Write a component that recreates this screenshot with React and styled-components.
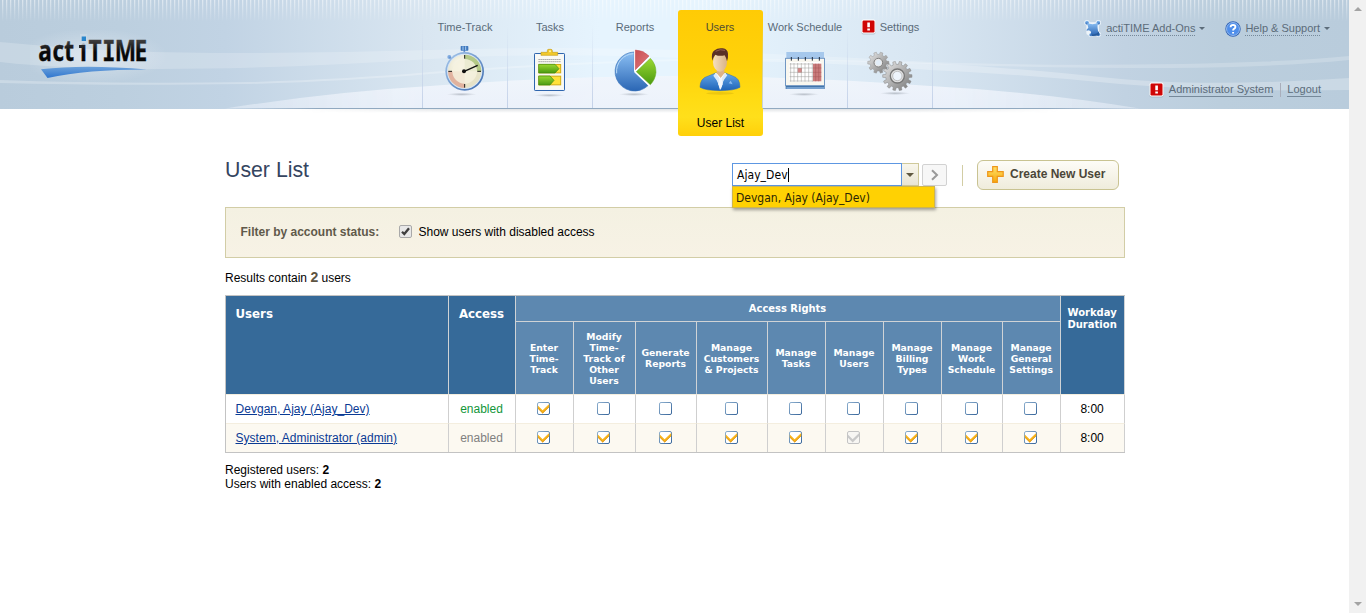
import React from 'react';
import styled, { createGlobalStyle, css } from 'styled-components';

const GlobalStyle = createGlobalStyle`
  * { box-sizing: border-box; }
  html, body { margin: 0; padding: 0; background: #fff; overflow: hidden; }
  body { font: 12px/14px Arial, "Liberation Sans", sans-serif; color: #000; }
`;

const Window = styled.div`
  display: flex;
  height: 613px;
  width: 1366px;
  overflow: hidden;
`;

const Page = styled.div`
  flex: 1;
  min-width: 0;
`;

const Scrollbar = styled.div`
  width: 17px;
  background: #f1f1f1;
  display: flex;
  flex-direction: column;
  justify-content: space-between;
  align-items: center;
  padding: 7px 0 7px;
`;

const ScrollArrow = styled.i`
  border: 4px solid transparent;
  border-top-width: 0;
  border-bottom: 4px solid #a3a3a3;
  ${p => p.$down && css`transform: rotate(180deg);`}
`;

const Header = styled.header`
  position: relative;
  height: 109px;
  display: flex;
  background: linear-gradient(90deg, #b9ccdc 0, #bccfdf 120px, #c1d3e4 225px, #d9e6f1 425px, #e6f4fe 600px, #e6f4fe 700px, #d8e6f2 925px, #c1d2e2 1125px, #bbcedd 1220px, #b9ccdc 1349px);
`;

const Backdrop = styled.svg`
  position: absolute;
  left: 0;
  top: 0;
`;

const Brand = styled.div`
  position: relative;
  width: 422px;
  padding: 30px 0 0 30px;
`;

const Nav = styled.nav`
  position: relative;
  display: flex;
  align-items: flex-start;
  width: 511px;
  height: 109px;
`;

const NavItem = styled.a`
  width: 85px;
  height: 108px;
  padding-top: 20px;
  border-left: 1px solid;
  border-image: linear-gradient(rgba(185,203,229,0) 25px, #c3d1e8) 1;
  color: #5a6b79;
  font-size: 11px;
  display: flex;
  flex-direction: column;
  align-items: center;
  white-space: nowrap;
  ${p => p.$active && css`
    height: 126px;
    width: 85px;
    margin: 10px -1px 0 1px;
    padding: 10px 1px 0 0;
    border: 0;
    border-radius: 3px;
    color: #4f4c32;
    background: linear-gradient(#ffcb05 0, #ffd20a 45%, #ffdc14 72%, #ffdf1b 85%, #ffd00a 100%);
  `}
`;

const NavEnd = styled.span`
  height: 108px;
  width: 1px;
  background: linear-gradient(rgba(185,203,229,0) 25px, #c3d1e8);
`;

const NavLabel = styled.span`
  display: flex;
  align-items: center;
  gap: 4px;
  height: 14px;
`;

const NavIcon = styled.svg`
  display: block;
  margin-top: 6px;
  width: 84px;
  height: 60px;
  flex: none;
`;

const SubLabel = styled.span`
  margin-top: 16px;
  padding-left: 1px;
  font-size: 12px;
  color: #000;
`;

const HeaderLinks = styled.div`
  position: relative;
  flex: 1;
  display: flex;
  flex-direction: column;
  align-items: flex-end;
  justify-content: space-between;
  padding: 20px 19px 11px 0;
`;

const LinkRow = styled.div`
  display: flex;
  align-items: center;
  height: 17px;
  padding-right: ${p => p.$inset || 0}px;
`;

const MenuLink = styled.span`
  display: flex;
  align-items: center;
  margin-left: ${p => p.$gap || 0}px;
`;

const HeadLink = styled.a`
  font-size: 11px;
  line-height: 13px;
  color: #5c6c7a;
  margin-left: ${p => p.$gap}px;
  border-bottom: 1px ${p => (p.$dotted ? 'dotted' : 'solid')} #76899a;
`;

const Caret = styled.i`
  border: ${p => p.$size || 3}px solid transparent;
  border-top-color: ${p => p.$color || '#5c6c7a'};
  border-bottom: 0;
  margin-left: ${p => p.$gap || 0}px;
`;

const LinkDivider = styled.i`
  width: 1px;
  height: 14px;
  margin-left: 6.5px;
  background: #a9aebb;
`;

const Main = styled.main`
  width: 900px;
  margin-left: 225px;
`;

const TitleRow = styled.div`
  height: 98px;
  padding: 51px 6px 0 0;
  display: flex;
  justify-content: space-between;
  align-items: flex-start;
`;

const Title = styled.h1`
  margin: 0;
  font-size: 21.3px;
  line-height: 21px;
  font-weight: normal;
  color: #35455f;
`;

const Tools = styled.div`
  display: flex;
  align-items: center;
  height: 30px;
`;

const Combo = styled.div`
  position: relative;
  display: flex;
  width: 187px;
  height: 23px;
  margin-bottom: 1px;
  font: 12px/20px "DejaVu Sans Condensed", "DejaVu Sans", sans-serif;
`;

const ComboInput = styled.div`
  width: 170px;
  border: 1px solid #5d97e2;
  background: #fff;
  padding: 2px 4px 1px;
  letter-spacing: .06px;
  display: flex;
  align-items: center;
`;

const TextCursor = styled.i`
  width: 1px;
  height: 14px;
  background: #000;
`;

const ComboButton = styled.div`
  width: 17px;
  border: 1px solid #cfc99a;
  border-left: 0;
  background: linear-gradient(#f8f6ec, #e9e5d4);
  display: flex;
  align-items: center;
  justify-content: center;
`;

const Suggestion = styled.div`
  position: absolute;
  top: 23px;
  left: 0;
  width: 203px;
  height: 22px;
  padding: 1px 3px 0;
  border: 1px solid #d0b64a;
  background: #ffd103;
  color: #2b2604;
  white-space: nowrap;
  box-shadow: 1px 2px 3px rgba(0,0,0,.35);
`;

const GoButton = styled.div`
  width: 25px;
  height: 22px;
  margin-left: 3px;
  border: 1px solid #d2d2d2;
  border-radius: 2px;
  background: #f7f7f7;
  display: flex;
  align-items: center;
  justify-content: center;
`;

const ToolDivider = styled.i`
  width: 1px;
  height: 21px;
  margin: 0 14px 0 15px;
  background: #d2cda4;
`;

const CreateButton = styled.button`
  width: 142px;
  height: 30px;
  padding: 0 0 2px 8px;
  border: 1px solid #c9c392;
  border-radius: 6px;
  background: linear-gradient(#fdfcf7, #efecdc);
  color: #4b4638;
  font: bold 12px Arial, "Liberation Sans", sans-serif;
  display: flex;
  align-items: center;
  gap: 5px;
  white-space: nowrap;
`;

const FilterPanel = styled.section`
  height: 51px;
  border: 1px solid #d2cda6;
  background: linear-gradient(#f4f1e2, #f7f2e5);
  display: flex;
  align-items: center;
  padding: 0 0 2px 14.5px;
`;

const FilterLabel = styled.b`
  color: #60594a;
  width: 158px;
`;

const FilterText = styled.label`
  margin-left: 7px;
`;

const Results = styled.p`
  margin: 0;
  height: 37px;
  line-height: 39px;
`;

const Count = styled.b`
  font-size: 14px;
  color: #5e5442;
`;

const Table = styled.table`
  width: 900px;
  table-layout: fixed;
  border-collapse: separate;
  border-spacing: 0;
  border: 1px solid #c3c3c3;
  border-right: 0;
`;

const Th = styled.th`
  padding: ${p => p.$pad || '0 1px 0 0'};
  background: ${p => (p.$dark ? '#366a99' : '#5d88b0')};
  color: #fff;
  font: bold ${p => p.$size || 9.25}px/${p => p.$line || 11}px "DejaVu Sans", Verdana, sans-serif;
  text-align: ${p => p.$align || 'center'};
  vertical-align: ${p => (p.$top ? 'top' : 'middle')};
  height: ${p => (p.$group ? 26 : 72)}px;
  white-space: nowrap;
  border-right: 1px solid #cfd3d6;
  ${p => p.$group && css`border-bottom: 1px solid #cfd3d6;`}
`;

const Row = styled.tr`
  background: ${p => (p.$alt ? '#fcf9f1' : '#fff')};
`;

const Td = styled.td`
  height: 29px;
  padding: ${p => p.$pad || '0 2px 2px 0'};
  border-top: 1px solid #f4eedf;
  border-right: 1px solid #cfcfcf;
  text-align: ${p => p.$align || 'center'};
  color: ${p => p.$color || '#000'};
  vertical-align: middle;
  svg { display: block; margin: 0 auto; }
`;

const UserLink = styled.a`
  color: #0a3a94;
  text-decoration: underline;
  letter-spacing: .03px;
`;

const Totals = styled.p`
  margin: 10px 0 0;
`;

function Alert() {
  return (
    <svg width="15" height="16" viewBox="0 0 15 16">
      <rect x=".5" y="1.5" width="14" height="14" rx="2" fill="#8796a3" opacity=".45" />
      <rect x=".5" y=".5" width="14" height="14" rx="2" fill="#fff" />
      <rect x="1.5" y="1.5" width="12" height="12" rx="1.2" fill="#cf0505" />
      <path d="M6.3 3.5h2.6v4.800H6.3zM6.3 9.600h2.600v2H6.3z" fill="#fff" />
    </svg>
  );
}

function Logo() {
  return (
    <svg width="150" height="60" viewBox="30 30 150 60">
      <defs>
        <linearGradient id="ink" x1="0" y1="39" x2="0" y2="61" gradientUnits="userSpaceOnUse">
          <stop offset="0" stopColor="#444" /><stop offset=".6" stopColor="#080808" />
        </linearGradient>
        <linearGradient id="swoosh" x1="0" y1="67" x2="0" y2="78" gradientUnits="userSpaceOnUse">
          <stop offset="0" stopColor="#6aa0da" /><stop offset="1" stopColor="#2f76cf" />
        </linearGradient>
        <radialGradient id="halo"><stop offset="0" stopColor="#fff" stopOpacity=".38" /><stop offset="1" stopColor="#fff" stopOpacity="0" /></radialGradient>
      </defs>
      <ellipse cx="93" cy="56" rx="75" ry="28" fill="url(#halo)" />
      <text
        transform="scale(.78 1)" y="60.800" x="49.200 67.200 82.300 102.500 113.500 131 147 172.500"
        fontFamily="Open Sans, Noto Sans, sans-serif" fontWeight="bold" fontSize="29"
        fill="url(#ink)" stroke="url(#ink)" strokeWidth=".35"
      >actiT<tspan fontFamily="DejaVu Sans Mono, monospace" fontSize="28">I</tspan>ME</text>
      <rect x="80" y="34" width="7" height="9.500" fill="#c9d8e5" />
      <rect x="79" y="45" width="4" height="3" fill="#262626" />
      <rect x="81.700" y="36.500" width="4.300" height="4.500" fill="#2b86cc" />
      <path d="M41 69.300Q85 64 147 69.600Q88 69.500 47.500 78Z" fill="url(#swoosh)" />
    </svg>
  );
}

function HeaderBackdrop() {
  return (
    <Backdrop width="1349" height="115" viewBox="0 0 1349 115">
      <defs>
        <pattern id="bars" width="4" height="22" patternUnits="userSpaceOnUse"><rect x="2" width="1.300" height="22" fill="#fff" /></pattern>
        <linearGradient id="fade" x1="0" y1="0" x2="0" y2="1"><stop offset="0" stopColor="#fff" stopOpacity=".5" /><stop offset="1" stopColor="#fff" stopOpacity="0" /></linearGradient>
        <mask id="barMask"><rect width="1349" height="22" fill="url(#fade)" /></mask>
        <linearGradient id="hill" x1="0" y1="76" x2="0" y2="108" gradientUnits="userSpaceOnUse"><stop offset="0" stopColor="#f2f6fc" /><stop offset="1" stopColor="#edf2fb" /></linearGradient>
        <linearGradient id="hillFade" x1="225" x2="1140" gradientUnits="userSpaceOnUse"><stop offset="0" stopColor="#fff" stopOpacity=".5" /><stop offset=".22" stopColor="#fff" /><stop offset=".78" stopColor="#fff" /><stop offset="1" stopColor="#fff" stopOpacity=".5" /></linearGradient>
        <mask id="hillMask"><rect x="220" y="60" width="930" height="50" fill="url(#hillFade)" /></mask>
        <linearGradient id="edge" x1="225" x2="1140" gradientUnits="userSpaceOnUse"><stop offset="0" stopColor="#91a9c0" stopOpacity="0" /><stop offset=".1" stopColor="#91a9c0" /><stop offset=".9" stopColor="#91a9c0" /><stop offset="1" stopColor="#91a9c0" stopOpacity="0" /></linearGradient>
        <linearGradient id="drop" x1="0" y1="0" x2="0" y2="1"><stop offset="0" stopColor="#6a7886" stopOpacity=".2" /><stop offset="1" stopColor="#6a7886" stopOpacity="0" /></linearGradient>
        <linearGradient id="dropFade" x1="0" y1="0" x2="1" y2="0"><stop offset="0" stopColor="#fff" stopOpacity="0" /><stop offset=".2" stopColor="#fff" /><stop offset=".8" stopColor="#fff" /><stop offset="1" stopColor="#fff" stopOpacity="0" /></linearGradient>
        <mask id="dropMask"><rect x="300" y="109" width="760" height="5" fill="url(#dropFade)" /></mask>
      </defs>
      <rect width="1349" height="22" fill="url(#bars)" mask="url(#barMask)" />
      <g fill="#fff">
        <path opacity=".2" d="M0 42Q110 53 215 53Q330 53 430 50Q560 46 680 50Q810 55 930 62Q1040 66 1180 64Q1290 62 1349 56V60Q1280 67 1170 68Q1040 68 930 64Q810 60 680 58Q540 52 430 59Q280 69 160 69Q60 69 0 62Z" />
        <path opacity=".25" d="M0 80Q110 84 250 82Q350 79 430 72Q560 62 680 59Q810 58 930 63Q1040 70 1100 77Q1200 88 1349 78V90Q1220 92 1120 84Q1020 74 930 70Q800 60 680 61Q560 64 430 74Q350 81 250 84Q110 86 0 83Z" />
      </g>
      <path d="M225 108.500Q330 92 430 86Q560 76 680 76Q800 76 930 86Q1040 92 1140 108.500Z" fill="url(#hill)" mask="url(#hillMask)" opacity=".9" />
      <rect x="225" y="108" width="915" height="1" fill="url(#edge)" />
      <rect x="300" y="109" width="760" height="4" fill="url(#drop)" mask="url(#dropMask)" />
    </Backdrop>
  );
}

const Shadow = ({ cx, cy }) => <ellipse cx={cx} cy={cy} rx="45" ry="5" fill="url(#iconShadow)" />;

const Defs = styled.svg`
  display: block;
  width: 0;
  height: 0;
`;

function IconDefs() {
  return (
    <Defs>
      <defs>
        <radialGradient id="iconShadow"><stop offset="0" stopColor="#6b7480" stopOpacity=".4" /><stop offset="1" stopColor="#6b7480" stopOpacity="0" /></radialGradient>
        <linearGradient id="rim" x1="0" y1="0" x2="1" y2="1"><stop offset="0" stopColor="#a9caee" /><stop offset="1" stopColor="#3a69ac" /></linearGradient>
        <radialGradient id="dial" cx=".4" cy=".35"><stop offset="0" stopColor="#fffef8" /><stop offset="1" stopColor="#e7e3c8" /></radialGradient>
        <linearGradient id="green" x1="0" y1="0" x2="0" y2="1"><stop offset="0" stopColor="#9ad832" /><stop offset="1" stopColor="#4b9a10" /></linearGradient>
        <linearGradient id="blue" x1="0" y1="0" x2="0" y2="1"><stop offset="0" stopColor="#8cc0f4" /><stop offset="1" stopColor="#2a66b4" /></linearGradient>
        <linearGradient id="red" x1="0" y1="0" x2="1" y2="1"><stop offset="0" stopColor="#c94f55" /><stop offset="1" stopColor="#e07b7b" /></linearGradient>
        <linearGradient id="skin" x1="0" y1="0" x2="1" y2="0"><stop offset="0" stopColor="#f6dfbf" /><stop offset="1" stopColor="#d9b387" /></linearGradient>
        <linearGradient id="coat" x1="0" y1="0" x2="0" y2="1"><stop offset="0" stopColor="#66a8ea" /><stop offset="1" stopColor="#1e63b8" /></linearGradient>
        <linearGradient id="steel" x1="0" y1="0" x2="1" y2="1"><stop offset="0" stopColor="#ececec" /><stop offset=".5" stopColor="#b0b0b0" /><stop offset="1" stopColor="#767676" /></linearGradient>
        <linearGradient id="gold" x1="0" y1="0" x2="0" y2="1"><stop offset="0" stopColor="#ffe36a" /><stop offset="1" stopColor="#f7a70c" /></linearGradient>
        <linearGradient id="boxEdge" x1="0" y1="0" x2="1" y2="1"><stop offset="0" stopColor="#8fb1d0" /><stop offset="1" stopColor="#37659a" /></linearGradient>
      </defs>
    </Defs>
  );
}

function StopwatchIcon() {
  return (
    <NavIcon viewBox="9 120 252 180">
      <Shadow cx={125} cy={283} />
      <circle cx="88" cy="171" r="6" fill="#7faae0" />
      <path d="M88 171l12 12M133 150v10" stroke="#6a94cc" strokeWidth="5" />
      <rect x="122" y="138" width="23" height="14" rx="2" fill="#3f78bd" />
      <path d="M129 139v12M137 139v12" stroke="#a9cdf0" strokeWidth="3" />
      <circle cx="134" cy="214" r="58" fill="url(#rim)" />
      <circle cx="134" cy="214" r="53" fill="#d9e6f4" />
      <circle cx="134" cy="214" r="50" fill="url(#dial)" />
      <path d="M134 214V164A50 50 0 0 1 184 214Z" fill="#a9c37a" opacity=".85" />
      <path d="M134 214V264A50 50 0 0 1 84 214Z" fill="#dfa593" opacity=".8" />
      <circle cx="134" cy="214" r="37" fill="#f4f1de" opacity=".85" />
      <path d="M134 165v11M134 252v11M85 214h11M172 214h11" stroke="#1c1c1c" strokeWidth="3" />
      <path d="M131 215L173 196" stroke="#111" strokeWidth="4" />
      <circle cx="132" cy="214" r="6" fill="#111" />
    </NavIcon>
  );
}

function ClipboardIcon() {
  return (
    <NavIcon viewBox="264 120 252 180">
      <Shadow cx={388} cy={286} />
      <rect x="343.500" y="160.500" width="90" height="111" rx="2" fill="#f4f7fb" stroke="#2f66ae" strokeWidth="3" />
      <rect x="347" y="164" width="83" height="104" fill="#faf9f3" />
      <path d="M363 157h19v-5q0-4 4-4h6q5 0 5 4v5h16v9h-50z" fill="#f2c92b" stroke="#c99f16" strokeWidth="2" />
      <circle cx="390" cy="154" r="3" fill="#fff3ac" />
      <path d="M355 178.500h68M355 185h68" stroke="#8a8a8a" strokeWidth="2" strokeDasharray="5 1" />
      <rect x="357" y="193.500" width="65" height="25" fill="#ffe13a" stroke="#d1ac12" strokeWidth="3" />
      <rect x="357" y="228.500" width="65" height="26" fill="#ffe13a" stroke="#d1ac12" strokeWidth="3" />
      <path d="M356 193h49l12 13-12 13h-49z" fill="url(#green)" stroke="#3d8a0c" strokeWidth="2" />
      <path d="M356 228h34l12 13-12 14h-34z" fill="url(#green)" stroke="#3d8a0c" strokeWidth="2" />
    </NavIcon>
  );
}

function PieIcon() {
  return (
    <NavIcon viewBox="519 120 252 180">
      <Shadow cx={642} cy={283} />
      <path d="M643 215V156A58.500 58.500 0 1 0 685 256Z" fill="url(#blue)" stroke="#3c75bb" strokeWidth="2" />
      <path d="M640 161A53 53 0 0 0 590 220" fill="none" stroke="#b9daf8" strokeWidth="3" />
      <path d="M644 215V150M644 215L691 172M644 215L689 258" stroke="#fff" strokeWidth="4" />
      <path d="M646 209V150Q669 150 687 168Z" fill="url(#red)" stroke="#c8464c" strokeWidth="1.500" />
      <path d="M649 215L691 175Q708 192 708 217Q706 239 691 254Z" fill="url(#green)" stroke="#62a81a" strokeWidth="1.500" />
    </NavIcon>
  );
}

function UserIcon() {
  return (
    <NavIcon viewBox="24 120 252 180">
      <ellipse cx="150" cy="280" rx="42" ry="4" fill="#8a6a00" opacity=".16" />
      <path d="M90 262Q90 234 115 228L137 219H166L188 228Q210 234 210 262Q192 272 150 272Q108 272 90 262Z" fill="url(#coat)" stroke="#2a6ab8" strokeWidth="1.500" />
      <path d="M135 219L150 270L168 219Z" fill="#fff" />
      <path d="M137 219l-7 8 13 18 8 22 10-26 11-15-7-7-13 20z" fill="#dceaf9" />
      <path d="M148 233h7l3 20-6 16-6-16z" fill="#f4f7fb" />
      <path d="M140 205h23v15l-11 14-12-14z" fill="#ddb388" />
      <ellipse cx="150" cy="186" rx="21" ry="29" fill="url(#skin)" />
      <path d="M127 182Q122 158 134 151Q143 143 158 145Q173 147 174 161Q175 173 171 184Q168 172 164 166Q148 170 136 164Q130 170 127 182Z" fill="#5b3026" />
      <path d="M137 154Q150 146 165 151" stroke="#966153" strokeWidth="3" fill="none" />
      <path d="M176 250l6-8 6 11" fill="#8abaf0" />
    </NavIcon>
  );
}

function CalendarIcon() {
  const cols = [362, 372, 383, 394, 405, 416, 427];
  const rows = [192, 204, 217, 230, 243];
  return (
    <NavIcon viewBox="279 120 252 180">
      <Shadow cx={402} cy={283} />
      <path d="M349 156h113v26H349z" fill="#a6c8ec" />
      <path d="M347 252h117v15H347z" fill="#3a6da6" />
      <path d="M349 262h113v4H349z" fill="#8bb2dd" />
      <rect x="346.500" y="175" width="117" height="82" fill="#f9f7ef" stroke="#7197c3" strokeWidth="3" />
      <path d="M358 186h96v60h-96z" fill="#fff" />
      <path d="M429 191h25v53h-25z" fill="#c97b7b" />
      <path d="M383 204h13v14h-13z" fill="#d88686" />
      <g stroke="#9a9a96" strokeWidth="1.500">
        {cols.map(x => <path key={x} d={`M${x} 189v56`} />)}
        {rows.map(y => <path key={y} d={`M359 ${y}h70`} />)}
      </g>
      <path d="M437 191v53M446 191v53M429 204h25M429 217h25M429 230h25" stroke="#a75656" strokeWidth="1.500" />
      {[364, 385, 406, 427, 448].map(x => <path key={x} d={`M${x} 171v11`} stroke="#1f2b3a" strokeWidth="3" />)}
    </NavIcon>
  );
}

function gearPath(cx, cy, outer, inner, teeth) {
  const pts = [];
  const step = (Math.PI * 2) / teeth;
  for (let i = 0; i < teeth; i += 1) {
    [[-0.3, inner], [-0.2, outer], [0.2, outer], [0.3, inner]].forEach(([o, r]) => {
      const a = (i + o) * step;
      pts.push(`${(cx + r * Math.cos(a)).toFixed(1)} ${(cy + r * Math.sin(a)).toFixed(1)}`);
    });
  }
  return `M${pts.join('L')}Z`;
}

function GearsIcon() {
  return (
    <NavIcon viewBox="534 120 252 180">
      <Shadow cx={675} cy={280} />
      <path d={gearPath(625, 188, 32, 25, 10)} fill="url(#steel)" stroke="#979797" strokeWidth="1.500" />
      <circle cx="625" cy="188" r="13" fill="#e9e9e9" stroke="#808080" strokeWidth="3" />
      <circle cx="625" cy="188" r="8" fill="#e2edf7" />
      <path d={gearPath(682, 228, 44, 35, 14)} fill="url(#steel)" stroke="#858585" strokeWidth="1.500" />
      <circle cx="682" cy="228" r="21" fill="#e0e0e0" stroke="#777" strokeWidth="4" />
      <circle cx="682" cy="228" r="14" fill="#eef4fb" stroke="#aaa" strokeWidth="2" />
    </NavIcon>
  );
}

function PuzzleIcon() {
  return (
    <svg width="17" height="17" viewBox="42 28 51 51">
      <g fill="#edf4fa">
        <rect x="49" y="35" width="38" height="38" rx="6" />
        <circle cx="51" cy="36" r="8" /><circle cx="85" cy="36" r="8" /><circle cx="85" cy="71" r="8" /><circle cx="62" cy="72" r="7" />
      </g>
      <g fill="url(#blue)">
        <circle cx="51" cy="36" r="5.500" /><circle cx="85" cy="36" r="5.500" /><circle cx="85" cy="71" r="5.500" /><circle cx="63" cy="72" r="5" />
      </g>
      <path d="M52 37Q67 44 84 37Q80 53 87 70Q74 73 61 73Q66 64 60 60Q54 57 50 61Q48 56 55 51Q52 44 52 37Z" fill="url(#blue)" />
      <path d="M66 71Q82 72 86 62L88 72Q78 77 66 76Z" fill="#255a9c" />
    </svg>
  );
}

function HelpIcon() {
  return (
    <svg width="16" height="16" viewBox="0 0 16 16">
      <circle cx="8" cy="8" r="7.700" fill="#2f62b6" />
      <circle cx="8" cy="8" r="6.500" fill="#4f8eea" stroke="#b5d3f8" strokeWidth=".7" />
      <path d="M5.600 6.200Q5.700 3.900 8.100 3.900Q10.400 4 10.400 6Q10.400 7.200 9 7.900Q8.100 8.400 8.100 9.500M8.100 10.900v1.700" fill="none" stroke="#fff" strokeWidth="1.900" />
    </svg>
  );
}

function Check({ on, disabled }) {
  return (
    <svg width="13" height="13" viewBox="0 0 13 13">
      <rect x=".5" y=".5" width="12" height="12" rx="1.500" fill={disabled ? '#f7f6f3' : '#fff'} stroke={disabled ? '#c4c4c4' : 'url(#boxEdge)'} />
      {on && <path d="M.8 3.600L5.600 8.200L12.200 2V5L5.700 11.500L.8 6.600Z" fill={disabled ? '#c9c9c9' : '#f8b41c'} />}
      {on && !disabled && <path d="M1 6.400L5.700 11L12.200 4.700" fill="none" stroke="#d58a0a" strokeWidth=".7" />}
    </svg>
  );
}

function NativeCheck() {
  return (
    <svg width="13" height="13" viewBox="0 0 13 13">
      <rect x=".5" y=".5" width="12" height="12" rx="1.500" fill="#e8e8e8" stroke="#a9a9a9" />
      <path d="M3 6.700L5.300 9L10 3.200" fill="none" stroke="#3f3f3f" strokeWidth="2.300" />
    </svg>
  );
}

function PlusIcon() {
  return (
    <svg width="19" height="19" viewBox="0 0 19 19">
      <path d="M6.700 1.700h4.600v5h5.900v4.600h-5.900v6H6.700v-6H1.700V6.700h5z" fill="url(#gold)" stroke="#ee971b" strokeWidth="1.200" />
    </svg>
  );
}

const navItems = [
  { label: 'Time-Track', Icon: StopwatchIcon },
  { label: 'Tasks', Icon: ClipboardIcon },
  { label: 'Reports', Icon: PieIcon },
  { label: 'Users', Icon: UserIcon, sub: 'User List' },
  { label: 'Work Schedule', Icon: CalendarIcon },
  { label: 'Settings', Icon: GearsIcon, alert: true },
];

const widths = [223, 67, 58, 62, 61, 71, 58, 58, 58, 61, 58, 64];

const rights = [
  ['Enter', 'Time-', 'Track'],
  ['Modify', 'Time-', 'Track of', 'Other', 'Users'],
  ['Generate', 'Reports'],
  ['Manage', 'Customers', '& Projects'],
  ['Manage', 'Tasks'],
  ['Manage', 'Users'],
  ['Manage', 'Billing', 'Types'],
  ['Manage', 'Work', 'Schedule'],
  ['Manage', 'General', 'Settings'],
];

const users = [
  { name: 'Devgan, Ajay (Ajay_Dev)', color: '#12963a', checks: '100000000' },
  { name: 'System, Administrator (admin)', color: '#808080', checks: '11111d111' },
];

const lines = parts => parts.map((t, i) => <React.Fragment key={i}>{i > 0 && <br />}{t}</React.Fragment>);

export default function App() {
  return (
    <Window>
      <GlobalStyle />
      <Page>
        <IconDefs />
        <Header>
          <HeaderBackdrop />
          <Brand><Logo /></Brand>
          <Nav>
            {navItems.map(({ label, Icon, sub, alert }) => (
              <NavItem key={label} $active={!!sub}>
                <NavLabel>{alert && <Alert />}{label}</NavLabel>
                <Icon />
                {sub && <SubLabel>{sub}</SubLabel>}
              </NavItem>
            ))}
            <NavEnd />
          </Nav>
          <HeaderLinks>
            <LinkRow>
              <MenuLink>
                <PuzzleIcon />
                <HeadLink $gap={5} $dotted>actiTIME Add-Ons</HeadLink>
                <Caret $gap={4} />
              </MenuLink>
              <MenuLink $gap={20}>
                <HelpIcon />
                <HeadLink $gap={4} $dotted>Help &amp; Support</HeadLink>
                <Caret $gap={4} />
              </MenuLink>
            </LinkRow>
            <LinkRow $inset={9}>
              <Alert />
              <HeadLink $gap={5}>Administrator System</HeadLink>
              <LinkDivider />
              <HeadLink $gap={6.5}>Logout</HeadLink>
            </LinkRow>
          </HeaderLinks>
        </Header>
        <Main>
          <TitleRow>
            <Title>User List</Title>
            <Tools>
              <Combo>
                <ComboInput>Ajay_Dev<TextCursor /></ComboInput>
                <ComboButton><Caret $size={4} $color="#5f5840" /></ComboButton>
                <Suggestion>Devgan, Ajay (Ajay_Dev)</Suggestion>
              </Combo>
              <GoButton>
                <svg width="8" height="12" viewBox="0 0 8 12"><path d="M1 1.200L6 6L1 10.800" fill="none" stroke="#999" strokeWidth="2" /></svg>
              </GoButton>
              <ToolDivider />
              <CreateButton><PlusIcon />Create New User</CreateButton>
            </Tools>
          </TitleRow>
          <FilterPanel>
            <FilterLabel>Filter by account status:</FilterLabel>
            <NativeCheck />
            <FilterText>Show users with disabled access</FilterText>
          </FilterPanel>
          <Results>Results contain <Count>2</Count> users</Results>
          <Table>
            <colgroup>{widths.map((w, i) => <col key={i} width={w} />)}</colgroup>
            <thead>
              <tr>
                <Th rowSpan={2} $dark $top $size={11.8} $line={14} $align="left" $pad="11px 9.5px">Users</Th>
                <Th rowSpan={2} $dark $top $size={11.8} $line={14} $pad="11px 1px 0 0">Access</Th>
                <Th colSpan={9} $group $size={9.95}>Access Rights</Th>
                <Th rowSpan={2} $dark $top $size={10} $line={12} $pad="11px 1px 0 0">{lines(['Workday', 'Duration'])}</Th>
              </tr>
              <tr>{rights.map((r, i) => <Th key={i}>{lines(r)}</Th>)}</tr>
            </thead>
            <tbody>
              {users.map((u, i) => (
                <Row key={u.name} $alt={i === 1}>
                  <Td $align="left" $pad="0 9.5px"><UserLink>{u.name}</UserLink></Td>
                  <Td $color={u.color} $pad="0 1px 0 0">enabled</Td>
                  {[...u.checks].map((c, j) => <Td key={j}><Check on={c !== '0'} disabled={c === 'd'} /></Td>)}
                  <Td $pad="0 1px 0 0">8:00</Td>
                </Row>
              ))}
            </tbody>
          </Table>
          <Totals>Registered users: <b>2</b><br />Users with enabled access: <b>2</b></Totals>
        </Main>
      </Page>
      <Scrollbar><ScrollArrow /><ScrollArrow $down /></Scrollbar>
    </Window>
  );
}
